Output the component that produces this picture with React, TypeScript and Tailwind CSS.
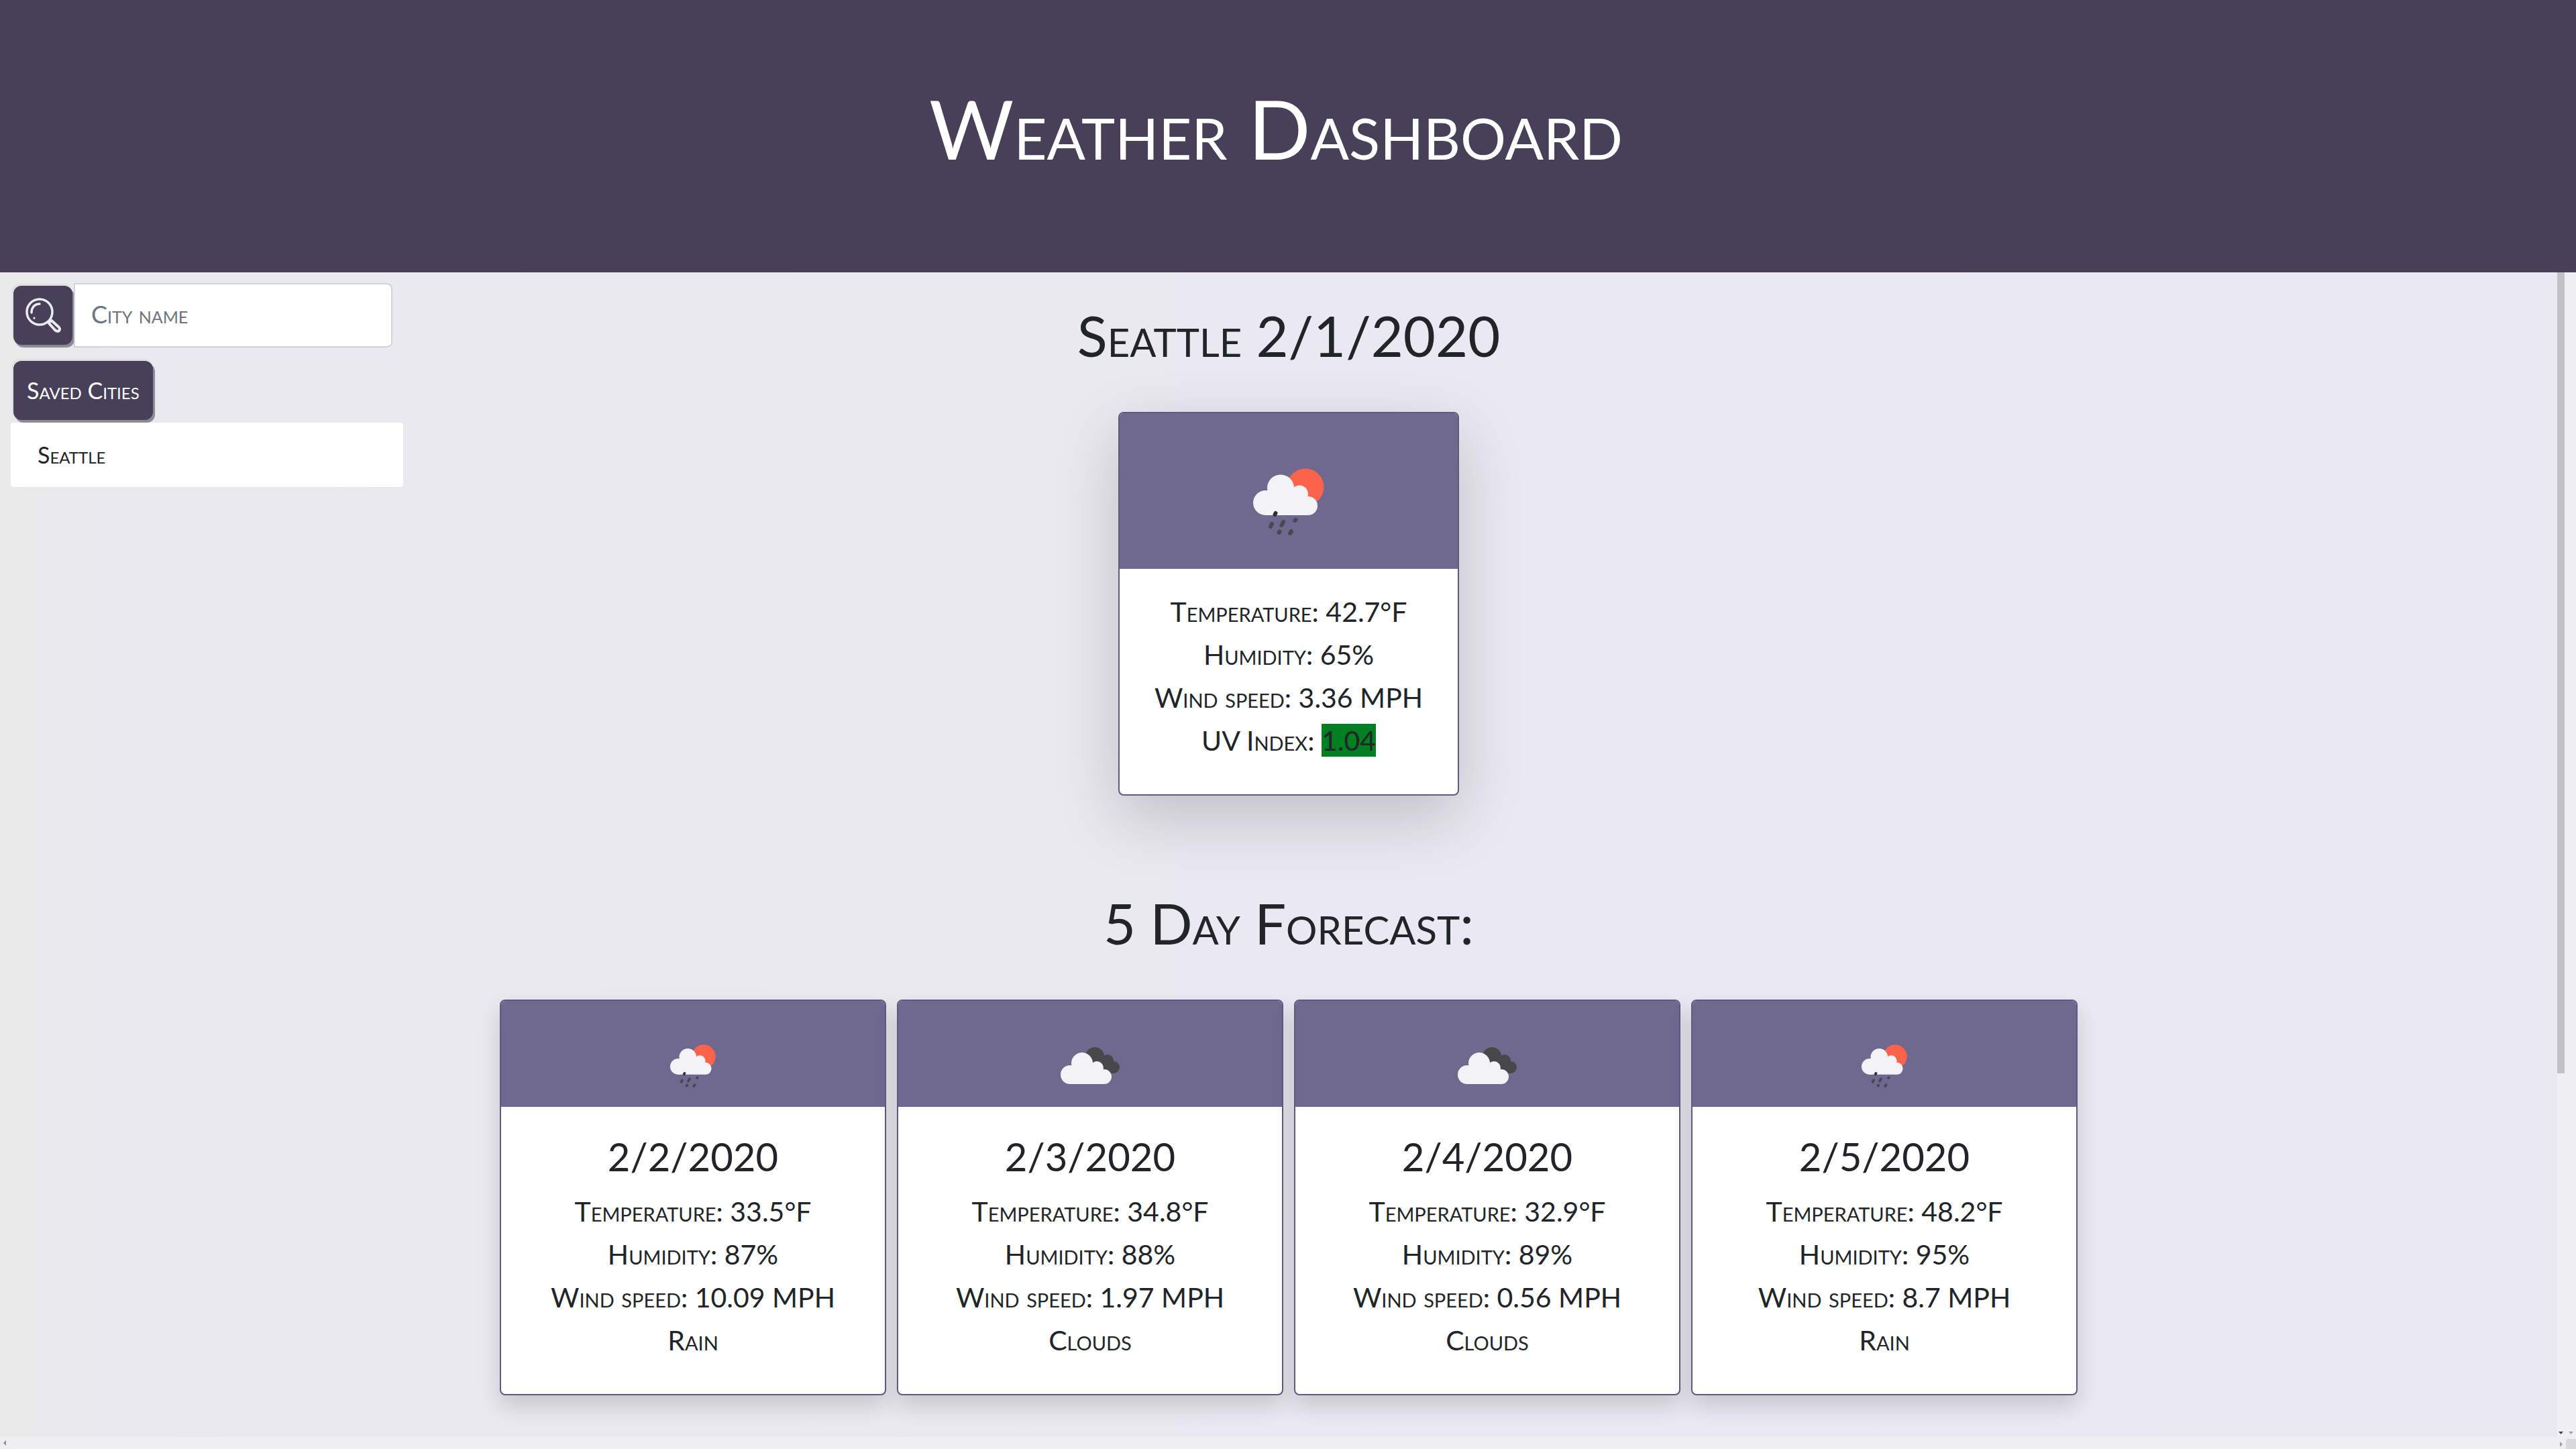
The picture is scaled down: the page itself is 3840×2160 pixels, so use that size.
import React from "react";

type Condition = "rain" | "clouds";

interface Forecast {
  date: string;
  icon: Condition;
  temperature: string;
  humidity: string;
  wind: string;
  summary: string;
}

const forecasts: Forecast[] = [
  { date: "2/2/2020", icon: "rain", temperature: "33.5", humidity: "87", wind: "10.09", summary: "Rain" },
  { date: "2/3/2020", icon: "clouds", temperature: "34.8", humidity: "88", wind: "1.97", summary: "Clouds" },
  { date: "2/4/2020", icon: "clouds", temperature: "32.9", humidity: "89", wind: "0.56", summary: "Clouds" },
  { date: "2/5/2020", icon: "rain", temperature: "48.2", humidity: "95", wind: "8.7", summary: "Rain" },
];

function RainIcon({ className }: { className: string }) {
  return (
    <svg viewBox="0 0 106 100" className={className} role="img" aria-label="Rain">
      <circle cx="78" cy="28" r="27.500" fill="#fb634a" />
      <g fill="#f3f2f4">
        <circle cx="41" cy="29.500" r="20" />
        <circle cx="69" cy="38.500" r="13" />
        <circle cx="18.500" cy="51.500" r="18.500" />
        <circle cx="82" cy="56" r="14" />
        <path d="M18 40H30L41 22L60 36L75 42L84 50L82 70H18Z" />
      </g>
      <g stroke="#4a484f" strokeWidth="6" strokeLinecap="round">
        <path d="M33.500 67L32.500 69" stroke="#2f2e33" />
        <path d="M28 83L26 87M45 80L42.500 85M63.500 77L62.500 78M39.500 94.500L38.500 96M57 94L55 97" />
      </g>
    </svg>
  );
}

function CloudsIcon({ className }: { className: string }) {
  return (
    <svg viewBox="0 0 88 56" className={className} role="img" aria-label="Clouds">
      <g fill="#484749">
        <circle cx="51" cy="14" r="14" />
        <circle cx="70" cy="20" r="9" />
        <circle cx="79" cy="30" r="9" />
        <path d="M51 8L70 14L80 28L79 39H50Z" />
      </g>
      <g fill="#f3f2f4">
        <circle cx="32" cy="24" r="16" />
        <circle cx="54" cy="31" r="10" />
        <circle cx="14" cy="41" r="14" />
        <circle cx="65" cy="44" r="11" />
        <path d="M14 30H22L32 16L48 27L60 36L66 42L65 55H14Z" />
      </g>
    </svg>
  );
}

function SearchIcon() {
  return (
    <svg viewBox="0 0 56 56" className="size-14" fill="none" stroke="#eceaf2" strokeLinecap="round" aria-hidden="true">
      <circle cx="23" cy="23" r="19" strokeWidth="3.5" />
      <path d="M11 24C11 16 16 11 23 11" strokeWidth="3.5" />
      <path d="M15 32V32.2" strokeWidth="3" />
      <path d="M38 38L40.500 35.500L52 46Q54 49 52 51Q49 53 46 50L37 40Z" strokeWidth="4" strokeLinejoin="round" />
    </svg>
  );
}

function CurrentCard() {
  return (
    <article className="mx-auto mt-[66px] w-[508px] overflow-hidden rounded-lg border-2 border-[#5f5a80] bg-white shadow-[0_32px_96px_rgba(0,0,0,0.18)]">
      <div className="flex h-[232px] items-center justify-center bg-[#6f688f] pt-8">
        <RainIcon className="h-[100px] w-[106px]" />
      </div>
      <div className="pt-8 pb-12 text-[41px] leading-[64px] text-[#212529]">
        <p>Temperature: 42.7°F</p>
        <p>Humidity: 65%</p>
        <p>Wind speed: 3.36 MPH</p>
        <p>
          UV Index: <span className="bg-[#008020]">1.04</span>
        </p>
      </div>
    </article>
  );
}

function ForecastCard({ day }: { day: Forecast }) {
  return (
    <article className="overflow-hidden rounded-lg border-2 border-[#5f5a80] bg-white shadow-[0_16px_32px_rgba(0,0,0,0.15)]">
      <div className="flex h-[158px] items-center justify-center bg-[#6f688f] pt-9">
        {day.icon === "rain" ? <RainIcon className="h-[66px] w-[68px]" /> : <CloudsIcon className="h-[56px] w-[88px]" />}
      </div>
      <div className="pt-10 pb-12 text-[41px] leading-[64px] text-[#212529]">
        <h3 className="mb-4 text-[58px] leading-[68px]">{day.date}</h3>
        <p>Temperature: {day.temperature}°F</p>
        <p>Humidity: {day.humidity}%</p>
        <p>Wind speed: {day.wind} MPH</p>
        <p>{day.summary}</p>
      </div>
    </article>
  );
}

export default function App() {
  return (
    <div
      className="flex min-h-screen flex-col bg-linear-to-r from-[#eaeaea] via-[#eae9ef] via-5% to-[#eae8f2] text-[#212529] [font-variant-caps:small-caps]"
      style={{ fontFamily: 'Lato, "Noto Sans", sans-serif' }}
    >
      <header className="flex h-[406px] items-center justify-center bg-[#464059] pr-9">
        <h1 className="pb-6 text-[122px] leading-[136px] text-white">Weather Dashboard</h1>
      </header>

      <div className="grid grow grid-cols-[minmax(0,1fr)_minmax(0,4fr)_minmax(0,1fr)]">
        <aside className="pt-4 pr-[39px] pl-4">
          <form className="mr-4 flex items-center pl-1" onSubmit={(e) => e.preventDefault()}>
            <button
              type="submit"
              aria-label="Search"
              className="flex size-[88px] shrink-0 items-center justify-center rounded-xl bg-[#464059] shadow-[3px_4px_1px_#8b8992,-2px_-3px_3px_#dddddf]"
            >
              <SearchIcon />
            </button>
            <input
              type="text"
              aria-label="City name"
              placeholder="City name"
              className="ml-0.5 h-24 min-w-0 grow rounded-r-lg border-2 border-[#ced4da] bg-white px-6 pb-1 text-[36px] [font-variant-caps:small-caps] placeholder:text-[#6c757d]"
            />
          </form>
          <button
            type="button"
            className="mt-5 ml-1 flex h-[88px] items-center rounded-xl bg-[#464059] px-5 pb-0.5 text-[34px] text-white shadow-[3px_4px_1px_#8b8992,-2px_-3px_3px_#dddddf] [font-variant-caps:small-caps]"
          >
            Saved Cities
          </button>
          <ul className="mt-1">
            <li className="flex h-24 items-center rounded-sm bg-white px-10 pb-0.5 text-[34px]">Seattle</li>
          </ul>
        </aside>

        <main className="pt-[46px] pr-[103px] pl-[105px] text-center">
          <h2 className="text-[83px] leading-24">Seattle 2/1/2020</h2>
          <CurrentCard />
          <h2 className="mt-[142px] text-[83px] leading-24">5 Day Forecast:</h2>
          <section className="mt-[66px] grid grid-cols-4 gap-4">
            {forecasts.map((day) => (
              <ForecastCard key={day.date} day={day} />
            ))}
          </section>
        </main>

        <div className="flex justify-end" aria-hidden="true">
          <div className="flex w-7 flex-col justify-between bg-[#f0eff4]">
            <div className="h-[1194px] w-[11px] bg-[#c1c0c5]" />
            <svg viewBox="0 0 28 12" className="h-3 w-7">
              <path d="M2 4H9L5.500 8Z" fill="#444" />
              <path d="M17 4H24L20.500 8Z" fill="#a0a0a0" />
            </svg>
          </div>
        </div>
      </div>

      <div className="flex h-[18px] items-center justify-between bg-[#efeef2] pl-1" aria-hidden="true">
        <svg viewBox="0 0 6 8" className="h-2 w-1.5">
          <path d="M5 0V8L1 4Z" fill="#8f8f8f" />
        </svg>
        <div className="flex h-full items-end">
          <svg viewBox="0 0 10 14" className="h-3.5 w-2.5">
            <path d="M1 3V11L5 7Z" fill="#a0a0a0" />
          </svg>
          <div className="h-[15px] w-[15px] rounded-tl-sm bg-[#d9d8dc]" />
        </div>
      </div>
    </div>
  );
}
